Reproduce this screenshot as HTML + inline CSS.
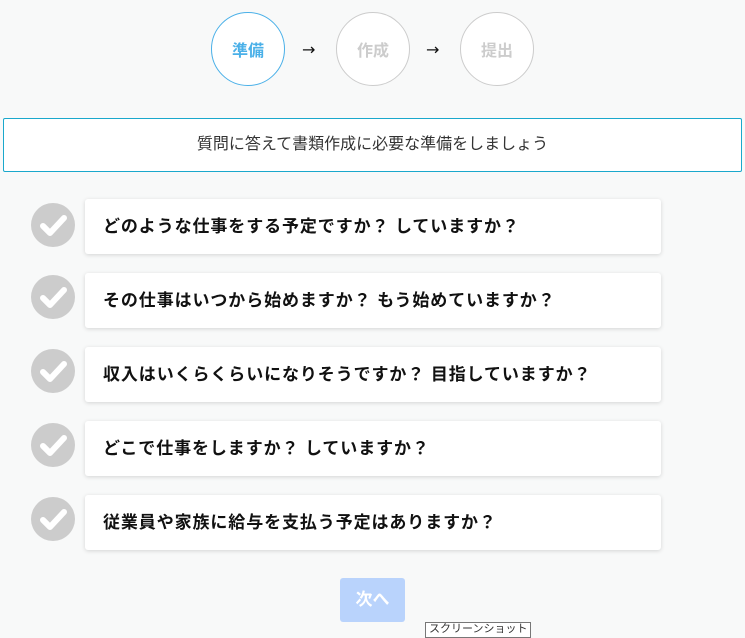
<!DOCTYPE html>
<html><head><meta charset="utf-8"><style>
body{margin:0;width:745px;height:631px;background:#f8f9f9;font-family:"Liberation Sans","Noto Sans CJK JP",sans-serif;position:relative;overflow:hidden}
.c{position:absolute;top:12px;width:72px;height:72px;border-radius:50%;border:1px solid #ccc;background:#fff;display:flex;align-items:center;justify-content:center;font-weight:bold;font-size:16px;color:#ccc}
.a{position:absolute;top:40px;font-size:16px;color:#111;font-family:"DejaVu Sans",sans-serif}
.banner{position:absolute;left:3px;top:118px;width:737px;height:52px;border:1px solid #1aa8cc;background:#fff;text-align:center;line-height:52px;font-size:16px;color:#333;border-radius:2px}
.card{position:absolute;left:85px;width:576px;height:55px;background:#fff;border-radius:3px;box-shadow:0 1px 4px rgba(0,0,0,.15);font-weight:bold;font-size:17px;letter-spacing:0.9px;line-height:55px;padding-left:18px;box-sizing:border-box;color:#111}
.ck{position:absolute;left:31px;width:44px;height:44px;border-radius:50%;background:#ccc}
.btn{position:absolute;left:340px;top:578px;width:65px;height:44px;background:#b9d3fc;border-radius:3px;color:#fff;font-weight:bold;font-size:17px;text-align:center;line-height:44px}
.tip{position:absolute;left:425px;top:622px;border:1px solid #777;background:#fff;font-size:11px;padding:0 3px;height:14px;line-height:12px;color:#333}
</style></head><body>
<div class="c" style="left:211px;border-color:#4ab0e8;color:#4ab0e8">準備</div>
<div class="a" style="left:302px">→</div>
<div class="c" style="left:336px">作成</div>
<div class="a" style="left:426px">→</div>
<div class="c" style="left:460px">提出</div>
<div class="banner">質問に答えて書類作成に必要な準備をしましょう</div>
<svg width="0" height="0" style="position:absolute"><defs><symbol id="k" viewBox="0 0 44 44"><path d="M12 23 L19 30 L33 15" fill="none" stroke="#fff" stroke-width="6" stroke-linecap="round" stroke-linejoin="round"/></symbol></defs></svg>
<div class="ck" style="top:203px"><svg width="44" height="44"><use href="#k"/></svg></div>
<div class="card" style="top:199px">どのような仕事をする予定ですか？ していますか？</div>
<div class="ck" style="top:275px"><svg width="44" height="44"><use href="#k"/></svg></div>
<div class="card" style="top:273px">その仕事はいつから始めますか？ もう始めていますか？</div>
<div class="ck" style="top:349px"><svg width="44" height="44"><use href="#k"/></svg></div>
<div class="card" style="top:347px">収入はいくらくらいになりそうですか？ 目指していますか？</div>
<div class="ck" style="top:423px"><svg width="44" height="44"><use href="#k"/></svg></div>
<div class="card" style="top:421px">どこで仕事をしますか？ していますか？</div>
<div class="ck" style="top:497px"><svg width="44" height="44"><use href="#k"/></svg></div>
<div class="card" style="top:495px">従業員や家族に給与を支払う予定はありますか？</div>
<div class="btn">次へ</div>
<div class="tip">スクリーンショット</div>
</body></html>
